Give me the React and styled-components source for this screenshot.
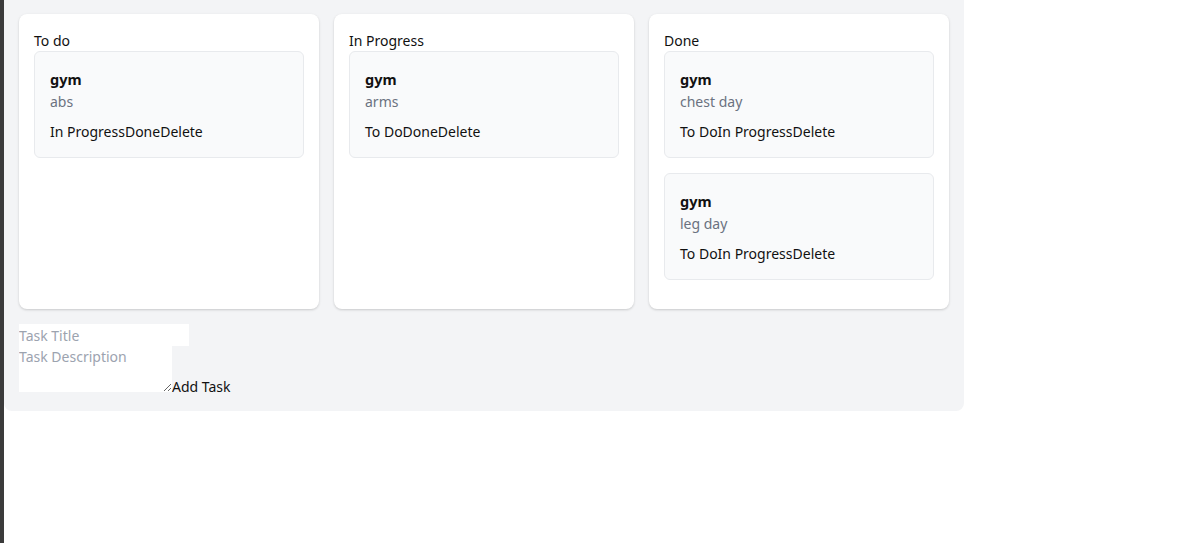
import React, { useState } from "react";
import styled, { createGlobalStyle } from "styled-components";

const GlobalStyle = createGlobalStyle`
  html, body {
    margin: 0;
    padding: 0;
    background: #ffffff;
  }
  body {
    border-left: 4px solid #3b3b3b;
    min-height: 543px;
    box-sizing: border-box;
    font-family: "Noto Sans", "Open Sans", sans-serif;
    color: #111111;
  }
`;

const Board = styled.div`
  width: 960px;
  box-sizing: border-box;
  padding: 14px 15px 15px;
  background: #f3f4f6;
  border-radius: 0 0 8px 8px;
`;

const Columns = styled.div`
  display: flex;
  gap: 15px;
`;

const Column = styled.div`
  width: 300px;
  height: 295px;
  box-sizing: border-box;
  padding: 16px 15px 15px;
  background: #ffffff;
  border-radius: 8px;
  box-shadow: 0 1px 3px rgba(0, 0, 0, 0.12), 0 1px 2px rgba(0, 0, 0, 0.06);
  display: flex;
  flex-direction: column;
`;

const ColumnTitle = styled.h2`
  margin: 0;
  font-size: 14px;
  font-weight: 400;
  line-height: 21px;
`;

const CardList = styled.div`
  display: flex;
  flex-direction: column;
  gap: 15px;
`;

const Card = styled.div`
  box-sizing: border-box;
  padding: 15px 15px 14px;
  background: #f9fafb;
  border: 1px solid #e8eaed;
  border-radius: 6px;
`;

const CardTitle = styled.h3`
  margin: 0;
  font-size: 14.5px;
  font-weight: 700;
  line-height: 25px;
`;

const CardDesc = styled.p`
  margin: 0;
  font-size: 14px;
  line-height: 20px;
  color: #6b7280;
`;

const Actions = styled.div`
  margin-top: 7px;
  line-height: 24px;
`;

const TextButton = styled.button`
  padding: 0;
  border: none;
  background: none;
  font-family: inherit;
  font-size: 14px;
  color: #111111;
  cursor: pointer;
`;

const Form = styled.form`
  margin-top: 15px;
  font-size: 15px;
`;

const TitleInput = styled.input`
  display: block;
  width: 170px;
  height: 22px;
  box-sizing: border-box;
  padding: 0;
  border: none;
  outline: none;
  background: #ffffff;
  font-family: inherit;
  font-size: 14px;
  &::placeholder {
    color: #9ca3af;
  }
`;

const DescInput = styled.textarea`
  width: 153px;
  height: 46px;
  box-sizing: border-box;
  padding: 0;
  border: none;
  outline: none;
  background: #ffffff;
  font-family: inherit;
  font-size: 14px;
  line-height: 22px;
  &::placeholder {
    color: #9ca3af;
  }
`;

const AddButton = styled(TextButton)`
  font-size: 14px;
`;

const columns = [
  { id: "todo", title: "To do" },
  { id: "progress", title: "In Progress" },
  { id: "done", title: "Done" },
];

const labels = { todo: "To Do", progress: "In Progress", done: "Done" };

const initialTasks = [
  { id: 1, title: "gym", desc: "abs", status: "todo" },
  { id: 2, title: "gym", desc: "arms", status: "progress" },
  { id: 3, title: "gym", desc: "chest day", status: "done" },
  { id: 4, title: "gym", desc: "leg day", status: "done" },
];

export default function App() {
  const [tasks, setTasks] = useState(initialTasks);
  const [title, setTitle] = useState("");
  const [desc, setDesc] = useState("");

  const move = (id, status) =>
    setTasks((list) => list.map((t) => (t.id === id ? { ...t, status } : t)));
  const remove = (id) => setTasks((list) => list.filter((t) => t.id !== id));

  const addTask = (e) => {
    e.preventDefault();
    if (!title) return;
    setTasks((list) => [...list, { id: Date.now(), title, desc, status: "todo" }]);
    setTitle("");
    setDesc("");
  };

  return (
    <>
      <GlobalStyle />
      <Board>
        <Columns>
          {columns.map((col) => (
            <Column key={col.id}>
              <ColumnTitle>{col.title}</ColumnTitle>
              <CardList>
                {tasks
                  .filter((t) => t.status === col.id)
                  .map((task) => (
                    <Card key={task.id}>
                      <CardTitle>{task.title}</CardTitle>
                      <CardDesc>{task.desc}</CardDesc>
                      <Actions>
                        {columns
                          .filter((c) => c.id !== col.id)
                          .map((c) => (
                            <TextButton key={c.id} type="button" onClick={() => move(task.id, c.id)}>
                              {labels[c.id]}
                            </TextButton>
                          ))}
                        <TextButton type="button" onClick={() => remove(task.id)}>
                          Delete
                        </TextButton>
                      </Actions>
                    </Card>
                  ))}
              </CardList>
            </Column>
          ))}
        </Columns>
        <Form onSubmit={addTask}>
          <TitleInput
            placeholder="Task Title"
            value={title}
            onChange={(e) => setTitle(e.target.value)}
          />
          <DescInput
            placeholder="Task Description"
            value={desc}
            onChange={(e) => setDesc(e.target.value)}
          />
          <AddButton type="submit">Add Task</AddButton>
        </Form>
      </Board>
    </>
  );
}
